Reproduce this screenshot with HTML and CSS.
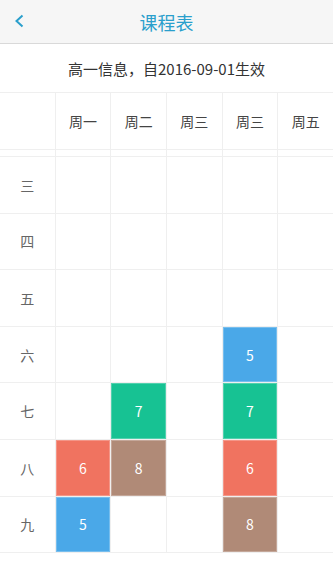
FILE: index.html
```html
<!DOCTYPE html>
<html lang="zh">
<head>
    <meta charset="UTF-8">
    <meta name="viewport" content="width=device-width, initial-scale=1.0">
    <title>课程表</title>
    <link rel="stylesheet" href="styles.css">
</head>
<body>
    <div class="topbar">
        <a class="back" href="#">
            <svg width="10" height="14" viewBox="0 0 10 14"><path d="M8.5 1.5 L2.5 7 L8.5 12.5" fill="none" stroke="#2a9fcc" stroke-width="2"/></svg>
        </a>
        <h1>课程表</h1>
    </div>

    <div class="subtitle">高一信息，自2016-09-01生效</div>

    <div class="table">
        <div class="cell head"></div>
        <div class="cell head">周一</div>
        <div class="cell head">周二</div>
        <div class="cell head">周三</div>
        <div class="cell head">周三</div>
        <div class="cell head">周五</div>

        <div class="cell strip"></div>
        <div class="cell strip"></div>
        <div class="cell strip"></div>
        <div class="cell strip"></div>
        <div class="cell strip"></div>
        <div class="cell strip"></div>

        <div class="cell label">三</div>
        <div class="cell"></div><div class="cell"></div><div class="cell"></div><div class="cell"></div><div class="cell"></div>

        <div class="cell label">四</div>
        <div class="cell"></div><div class="cell"></div><div class="cell"></div><div class="cell"></div><div class="cell"></div>

        <div class="cell label">五</div>
        <div class="cell"></div><div class="cell"></div><div class="cell"></div><div class="cell"></div><div class="cell"></div>

        <div class="cell label">六</div>
        <div class="cell"></div><div class="cell"></div><div class="cell"></div>
        <div class="cell course blue">5</div>
        <div class="cell"></div>

        <div class="cell label">七</div>
        <div class="cell"></div>
        <div class="cell course green">7</div>
        <div class="cell"></div>
        <div class="cell course green">7</div>
        <div class="cell"></div>

        <div class="cell label">八</div>
        <div class="cell course red">6</div>
        <div class="cell course brown">8</div>
        <div class="cell"></div>
        <div class="cell course red">6</div>
        <div class="cell"></div>

        <div class="cell label">九</div>
        <div class="cell course blue">5</div>
        <div class="cell"></div>
        <div class="cell"></div>
        <div class="cell course brown">8</div>
        <div class="cell"></div>
    </div>
</body>
</html>
```

FILE: styles.css
```css
body {
    margin: 0;
    font-family: "Noto Sans CJK SC", "Noto Sans", sans-serif;
    background: #ffffff;
    color: #333;
    overflow: hidden;
}
.topbar {
    position: relative;
    height: 43px;
    background: #f6f6f6;
    border-bottom: 1px solid #d9d9d9;
    display: flex;
    align-items: center;
    justify-content: center;
}
.topbar h1 {
    margin: 0;
    font-size: 18px;
    font-weight: normal;
    color: #2a9fcc;
}
.back {
    position: absolute;
    left: 14px;
    top: 14px;
    display: block;
    width: 10px;
    height: 14px;
}
.back svg {
    display: block;
}
.subtitle {
    height: 48px;
    display: flex;
    align-items: center;
    justify-content: center;
    font-size: 15px;
    color: #333;
}
.table {
    display: grid;
    grid-template-columns: repeat(6, 1fr);
    grid-template-rows: 56px 6px repeat(7, 55.6px);
    gap: 1px;
    background: #efefef;
    border-top: 1px solid #efefef;
    border-bottom: 1px solid #efefef;
}
.cell {
    background: #fff;
    display: flex;
    align-items: center;
    justify-content: center;
    font-size: 14px;
}
.head {
    color: #444;
}
.label {
    color: #666;
}
.course {
    color: #fff;
    box-shadow: inset 0 0 0 1px rgba(255, 255, 255, 0.25);
}
.blue { background: #4aa8e8; }
.green { background: #17c293; }
.red { background: #f07360; }
.brown { background: #b08a77; }
```
